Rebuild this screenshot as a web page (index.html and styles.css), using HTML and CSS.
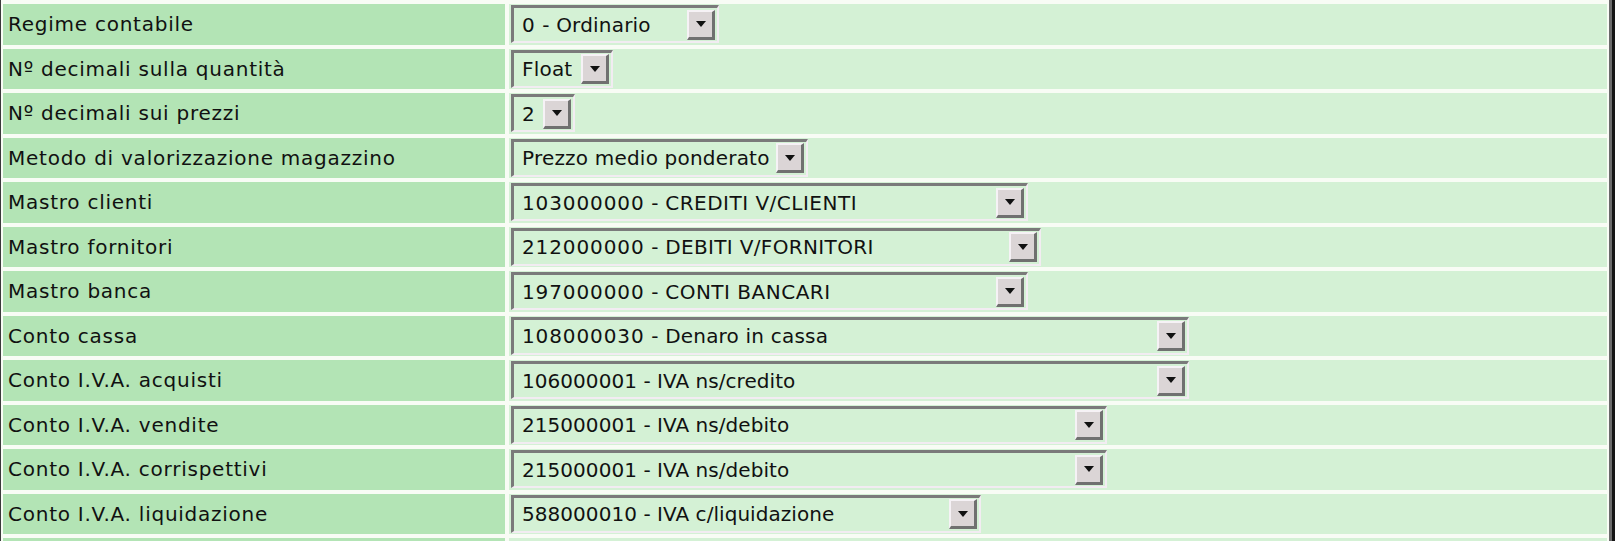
FILE: index.html
```html
<!DOCTYPE html>
<html lang="it">
<head>
<meta charset="utf-8">
<title>Configurazione</title>
<link rel="stylesheet" href="styles.css">
</head>
<body>
<div class="frame">
  <div class="form-grid">
    <div class="label">Regime contabile</div>
    <div class="value"><div class="sel w-regime"><span class="sel-text"><span class="code">0</span> - Ordinario</span><span class="sel-btn"><span class="tri"></span></span></div></div>

    <div class="label">Nº decimali sulla quantità</div>
    <div class="value"><div class="sel w-float"><span class="sel-text">Float</span><span class="sel-btn"><span class="tri"></span></span></div></div>

    <div class="label">Nº decimali sui prezzi</div>
    <div class="value"><div class="sel w-dec"><span class="sel-text"><span class="code">2</span></span><span class="sel-btn"><span class="tri"></span></span></div></div>

    <div class="label">Metodo di valorizzazione magazzino</div>
    <div class="value"><div class="sel w-metodo"><span class="sel-text">Prezzo medio ponderato</span><span class="sel-btn"><span class="tri"></span></span></div></div>

    <div class="label">Mastro clienti</div>
    <div class="value"><div class="sel w-clienti"><span class="sel-text"><span class="code">103000000</span> - <span class="caps">CREDITI V/CLIENTI</span></span><span class="sel-btn"><span class="tri"></span></span></div></div>

    <div class="label">Mastro fornitori</div>
    <div class="value"><div class="sel w-fornitori"><span class="sel-text"><span class="code">212000000</span> - <span class="caps-tight">DEBITI V/FORNITORI</span></span><span class="sel-btn"><span class="tri"></span></span></div></div>

    <div class="label">Mastro banca</div>
    <div class="value"><div class="sel w-clienti"><span class="sel-text"><span class="code">197000000</span> - <span class="caps">CONTI BANCARI</span></span><span class="sel-btn"><span class="tri"></span></span></div></div>

    <div class="label">Conto cassa</div>
    <div class="value"><div class="sel w-cassa"><span class="sel-text"><span class="code">108000030</span> - Denaro in cassa</span><span class="sel-btn"><span class="tri"></span></span></div></div>

    <div class="label">Conto I.V.A. acquisti</div>
    <div class="value"><div class="sel w-cassa"><span class="sel-text plain">106000001 - IVA ns/credito</span><span class="sel-btn"><span class="tri"></span></span></div></div>

    <div class="label">Conto I.V.A. vendite</div>
    <div class="value"><div class="sel w-vendite"><span class="sel-text plain">215000001 - IVA ns/debito</span><span class="sel-btn"><span class="tri"></span></span></div></div>

    <div class="label">Conto I.V.A. corrispettivi</div>
    <div class="value"><div class="sel w-vendite"><span class="sel-text plain">215000001 - IVA ns/debito</span><span class="sel-btn"><span class="tri"></span></span></div></div>

    <div class="label">Conto I.V.A. liquidazione</div>
    <div class="value"><div class="sel w-liq"><span class="sel-text plain">588000010 - IVA c/liquidazione</span><span class="sel-btn"><span class="tri"></span></span></div></div>

    <div class="label"></div>
    <div class="value"></div>
  </div>
</div>
</body>
</html>
```

FILE: styles.css
```css
html, body {
  margin: 0;
  padding: 0;
  height: 100%;
  overflow: hidden;
  background: #f8fcf5;
}

.frame {
  height: 100%;
  box-sizing: border-box;
  border-left: 1px solid #3a3a3a;
  border-right: 3px solid #151515;
  box-shadow: inset -3px 0 0 #6b6b6b;
  padding: 4px 5px 0 2px;
  font-family: "DejaVu Sans", Verdana, sans-serif;
  font-size: 20px;
  color: #111;
}

.form-grid {
  display: grid;
  grid-template-columns: 502px 1fr;
  grid-auto-rows: 40.5px;
  column-gap: 4px;
  row-gap: 4px;
}

.label {
  background: #b3e4b5;
  padding-left: 5px;
  display: flex;
  align-items: center;
  white-space: nowrap;
  letter-spacing: 0.75px;
}

.value {
  background: #d4f1d5;
  padding-left: 2px;
  display: flex;
  align-items: center;
}

.sel {
  box-sizing: border-box;
  height: 38px;
  display: flex;
  align-items: center;
  justify-content: space-between;
  border-style: solid;
  border-width: 3px 2px 2px 3px;
  border-color: #7a7a7a #f2ecf2 #f2ecf2 #7a7a7a;
  padding: 0 2px 0 8px;
  white-space: nowrap;
}

.sel-text {
  overflow: hidden;
  letter-spacing: 0.2px;
}

.sel-text.plain {
  letter-spacing: 0.05px;
}

.code {
  letter-spacing: 0.9px;
}

.caps {
  letter-spacing: 0.5px;
}

.caps-tight {
  letter-spacing: 0.35px;
}

.sel-btn {
  box-sizing: border-box;
  width: 28px;
  height: 30px;
  flex: none;
  background: #dbd5d6;
  border-style: solid;
  border-width: 2px 3px 3px 2px;
  border-color: #f6f2f6 #707070 #707070 #f6f2f6;
  display: flex;
  align-items: center;
  justify-content: center;
}

.tri {
  width: 0;
  height: 0;
  border-left: 5px solid transparent;
  border-right: 5px solid transparent;
  border-top: 6px solid #111;
}

.w-regime { width: 208px; }
.w-float { width: 102px; }
.w-dec { width: 64px; }
.w-metodo { width: 297px; }
.w-clienti { width: 517px; }
.w-fornitori { width: 530px; }
.w-cassa { width: 678px; }
.w-vendite { width: 596px; }
.w-liq { width: 470px; }
```
